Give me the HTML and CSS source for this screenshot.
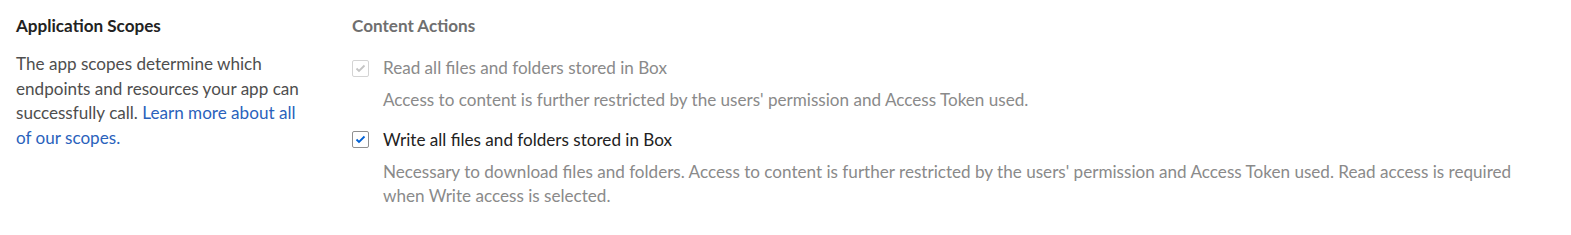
FILE: index.html
```html
<!DOCTYPE html>
<html lang="en">
<head>
<meta charset="UTF-8">
<title>Application Scopes</title>
<link rel="stylesheet" href="styles.css">
</head>
<body>
<div class="section">
  <div class="section-info">
    <h3>Application Scopes</h3>
    <p>The app scopes determine which endpoints and resources your app can successfully call. <a href="#">Learn more about all of our scopes.</a></p>
  </div>
  <div class="section-content">
    <h4>Content Actions</h4>
    <div class="scope disabled">
      <label class="scope-label">
        <span class="checkbox">
          <svg width="11" height="9" viewBox="0 0 11 9"><path d="M1.5 4.5 L4 7 L9.5 1.5" fill="none" stroke="currentColor" stroke-width="1.8"/></svg>
        </span>
        Read all files and folders stored in Box
      </label>
      <div class="scope-desc">Access to content is further restricted by the users' permission and Access Token used.</div>
    </div>
    <div class="scope">
      <label class="scope-label">
        <span class="checkbox">
          <svg width="11" height="9" viewBox="0 0 11 9"><path d="M1.5 4.5 L4 7 L9.5 1.5" fill="none" stroke="currentColor" stroke-width="1.8"/></svg>
        </span>
        Write all files and folders stored in Box
      </label>
      <div class="scope-desc">Necessary to download files and folders. Access to content is further restricted by the users' permission and Access Token used. Read access is required when Write access is selected.</div>
    </div>
  </div>
</div>
</body>
</html>
```
FILE: styles.css
```css
body {
  margin: 0;
  padding: 16px 16px 0 16px;
  font-family: Lato, "Open Sans", sans-serif;
  font-size: 17.1px;
  color: #222;
  background-color: #fff;
}
.section {
  display: flex;
}
.section-info {
  width: 292px;
  flex-shrink: 0;
  margin-right: 44px;
}
.section-info h3 {
  margin: 0 0 16px 0;
  font-size: 17.1px;
  font-weight: bold;
  line-height: 20px;
  color: #222;
}
.section-info p {
  margin: 0;
  line-height: 24.5px;
  color: #4e4e4e;
}
.section-info a {
  color: #2a62bc;
  text-decoration: none;
}
.section-content {
  flex: 1;
}
.section-content h4 {
  margin: 0 0 20px 0;
  font-size: 17.1px;
  font-weight: bold;
  line-height: 20px;
  color: #6f6f6f;
}
.scope {
  margin-bottom: 15px;
}
.scope-label {
  display: flex;
  align-items: center;
  line-height: 24px;
  color: #222;
}
.checkbox {
  width: 15px;
  height: 15px;
  border: 1px solid #909090;
  border-radius: 2px;
  margin-right: 14px;
  display: flex;
  align-items: center;
  justify-content: center;
  color: #0061d5;
}
.scope.disabled .scope-label {
  color: #8a8a8a;
}
.scope.disabled .checkbox {
  border-color: #d4d4d4;
  color: #c4c4c4;
}
.scope-desc {
  margin: 8px 0 0 31px;
  max-width: 1140px;
  line-height: 24.5px;
  color: #8a8a8a;
}
```
